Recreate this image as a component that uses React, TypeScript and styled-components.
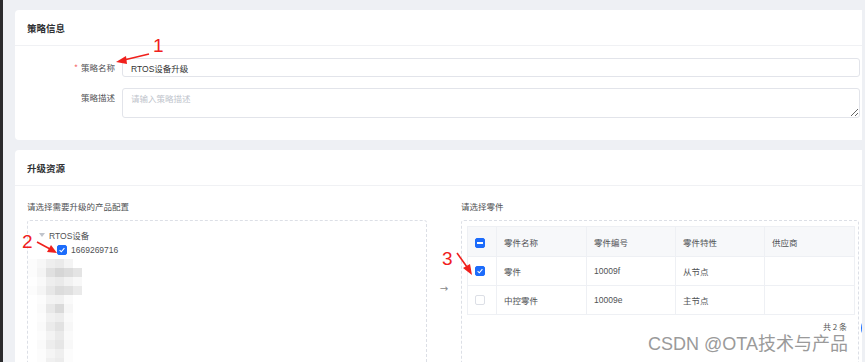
import styled, { createGlobalStyle } from "styled-components";

const GlobalStyle = createGlobalStyle`
  html, body {
    margin: 0;
    padding: 0;
    overflow: hidden;
    background: #eef0f4;
  }
  body {
    font-family: "Liberation Sans", "Noto Sans CJK SC", sans-serif;
    font-size: 8.5px;
    color: #505255;
  }
`;

type CheckState = "checked" | "indeterminate" | "none";

interface PartRow {
  name: string;
  code: string;
  role: string;
  supplier: string;
  checked: boolean;
}

const parts: PartRow[] = [
  { name: "零件", code: "10009f", role: "从节点", supplier: "", checked: true },
  { name: "中控零件", code: "10009e", role: "主节点", supplier: "", checked: false },
];

// 打码区域 (gray levels per 9px cell)
const mosaic: number[][] = [
  [252, 247, 238, 234, 244, 255],
  [252, 244, 224, 214, 220, 228],
  [254, 249, 238, 234, 242, 248],
  [252, 245, 231, 220, 224, 234],
  [255, 252, 243, 241, 250, 255],
  [255, 250, 232, 218, 246, 255],
  [255, 252, 241, 237, 250, 255],
  [255, 250, 235, 226, 247, 255],
  [255, 252, 243, 234, 250, 255],
  [255, 250, 237, 230, 248, 255],
  [255, 252, 245, 239, 252, 255],
  [255, 252, 240, 236, 252, 255],
];

export default function App() {
  return (
    <Frame>
      <GlobalStyle />
      <Card>
        <CardHeader>策略信息</CardHeader>
        <FormBody>
          <FormRow>
            <Label $required>策略名称</Label>
            <TextInput defaultValue="RTOS设备升级" />
          </FormRow>
          <FormRow>
            <Label>策略描述</Label>
            <TextArea placeholder="请输入策略描述" />
          </FormRow>
        </FormBody>
      </Card>

      <Card>
        <CardHeader>升级资源</CardHeader>
        <ResourceBody>
          <Column>
            <Caption>请选择需要升级的产品配置</Caption>
            <PickBox>
              <TreeRow>
                <Caret />
                <span>RTOS设备</span>
              </TreeRow>
              <TreeRow $indent={18}>
                <Check state="checked" />
                <span>1669269716</span>
              </TreeRow>
              <Mosaic width="54" height="108" viewBox="0 0 54 108">
                {mosaic.map((row, r) =>
                  row.map((g, c) => (
                    <rect
                      key={`${r}-${c}`}
                      x={c * 9}
                      y={r * 9}
                      width="9"
                      height="9"
                      fill={`rgb(${g},${g},${g})`}
                    />
                  ))
                )}
              </Mosaic>
            </PickBox>
          </Column>

          <ArrowCell>→</ArrowCell>

          <Column>
            <Caption>请选择零件</Caption>
            <PickBox $pad={5}>
              <Table>
                <colgroup>
                  <col style={{ width: 29 }} />
                  <col style={{ width: 90 }} />
                  <col style={{ width: 89 }} />
                  <col style={{ width: 89 }} />
                  <col />
                </colgroup>
                <thead>
                  <tr>
                    <HeadCell>
                      <Check state="indeterminate" />
                    </HeadCell>
                    <HeadCell>零件名称</HeadCell>
                    <HeadCell>零件编号</HeadCell>
                    <HeadCell>零件特性</HeadCell>
                    <HeadCell>供应商</HeadCell>
                  </tr>
                </thead>
                <tbody>
                  {parts.map(p => (
                    <tr key={p.code}>
                      <BodyCell>
                        <Check state={p.checked ? "checked" : "none"} />
                      </BodyCell>
                      <BodyCell>{p.name}</BodyCell>
                      <BodyCell>{p.code}</BodyCell>
                      <BodyCell>{p.role}</BodyCell>
                      <BodyCell>{p.supplier}</BodyCell>
                    </tr>
                  ))}
                </tbody>
              </Table>
              <Total>共 2 条</Total>
            </PickBox>
          </Column>
        </ResourceBody>
      </Card>

      <Watermark>CSDN @OTA技术与产品</Watermark>
      <FloatBtn />

      {/* 截图上的红色标注 */}
      <Marks width="865" height="362" viewBox="0 0 865 362">
        <g fill="#f0201c" stroke="#f0201c">
          <text x="153" y="52" fontSize="19" stroke="none" fontFamily="Liberation Sans, sans-serif">1</text>
          <line x1="149" y1="54" x2="124" y2="60" strokeWidth="1.6" />
          <polygon points="116,62 126,56 127,64" stroke="none" />

          <text x="22" y="248" fontSize="19" stroke="none" fontFamily="Liberation Sans, sans-serif">2</text>
          <line x1="37" y1="242" x2="50" y2="249" strokeWidth="1.6" />
          <polygon points="57,253 47,252 51,245" stroke="none" />

          <text x="442" y="265" fontSize="19" stroke="none" fontFamily="Liberation Sans, sans-serif">3</text>
          <line x1="457" y1="253" x2="467" y2="267" strokeWidth="1.6" />
          <polygon points="472,275 463,268 470,264" stroke="none" />
        </g>
      </Marks>
    </Frame>
  );
}

function Check({ state }: { state: CheckState }) {
  return (
    <CheckBox $state={state}>
      {state === "checked" && (
        <svg width="8" height="8" viewBox="0 0 8 8">
          <path d="M1.6 4.2 L3.3 5.8 L6.4 2.2" fill="none" stroke="#fff" strokeWidth="1.1" />
        </svg>
      )}
      {state === "indeterminate" && <Dash />}
    </CheckBox>
  );
}

// ---------- styled components ----------
const Frame = styled.div`
  position: relative;
  width: 862px;
  height: 362px;
  overflow: hidden;
  border-left: 3px solid #2b2b2d;
  padding: 10px 0 0 12px;
  box-sizing: border-box;
  display: flex;
  flex-direction: column;
  gap: 10px;
`;

const Card = styled.section`
  width: 860px;
  flex: 0 0 auto;
  background: #fff;
  border-radius: 4px;
`;

const CardHeader = styled.div`
  height: 36px;
  padding: 0 12px;
  display: flex;
  align-items: center;
  border-bottom: 1px solid #f0f1f4;
  box-sizing: border-box;
  color: #303133;
  font-family: "Noto Sans CJK SC", sans-serif;
  font-size: 9.5px;
  font-weight: 700;
`;

const FormBody = styled.div`
  display: flex;
  flex-direction: column;
  gap: 11px;
  padding: 12px 15px 22px 0;
`;

const FormRow = styled.div`
  display: flex;
  align-items: flex-start;
`;

const Label = styled.label<{ $required?: boolean }>`
  flex: 0 0 107px;
  padding-right: 7px;
  box-sizing: border-box;
  text-align: right;
  line-height: 19px;
  font-family: "Noto Sans CJK SC", sans-serif;
  font-size: 8.5px;
  color: #505255;
  &::before {
    content: ${({ $required }) => ($required ? '"*"' : "none")};
    color: #f56c6c;
    margin-right: 3px;
  }
`;

const TextInput = styled.input`
  flex: 1;
  height: 19px;
  padding: 0 8px;
  box-sizing: border-box;
  border: 1px solid #e2e4ea;
  border-radius: 3px;
  font-family: "Liberation Sans", "Noto Sans CJK SC", sans-serif;
  font-size: 8.5px;
  color: #333;
  outline: none;
`;

const TextArea = styled.textarea`
  flex: 1;
  height: 30px;
  padding: 3px 8px;
  box-sizing: border-box;
  border: 1px solid #e2e4ea;
  border-radius: 3px;
  font-family: "Noto Sans CJK SC", sans-serif;
  font-size: 8.5px;
  color: #333;
  outline: none;
  &::placeholder {
    color: #c0c4cc;
  }
`;

const ResourceBody = styled.div`
  display: grid;
  grid-template-columns: 400px 34px 398px;
  padding: 13px 16px 0 12px;
`;

const Column = styled.div`
  display: flex;
  flex-direction: column;
  gap: 7px;
`;

const Caption = styled.div`
  line-height: 14px;
  font-family: "Noto Sans CJK SC", sans-serif;
  font-size: 8.5px;
  color: #505255;
`;

const PickBox = styled.div<{ $pad?: number }>`
  height: 170px;
  padding: ${({ $pad }) => ($pad ?? 6)}px;
  box-sizing: border-box;
  border: 1px dashed #dcdfe6;
  border-radius: 3px;
  display: flex;
  flex-direction: column;
`;

const TreeRow = styled.div<{ $indent?: number }>`
  display: flex;
  align-items: center;
  gap: 4px;
  height: 15px;
  padding-left: ${({ $indent }) => 5 + ($indent ?? 0)}px;
  font-size: 8.5px;
  color: #505255;
`;

const Caret = styled.span`
  width: 0;
  height: 0;
  border-left: 3px solid transparent;
  border-right: 3px solid transparent;
  border-top: 4px solid #c0c4cc;
`;

const Mosaic = styled.svg`
  display: block;
  margin: 2px 0 0 -6px;
`;

const ArrowCell = styled.div`
  padding-top: 83px;
  text-align: center;
  color: #888;
  font-family: "DejaVu Sans", sans-serif;
  font-size: 10px;
  line-height: 14px;
`;

const Table = styled.table`
  width: 388px;
  border-collapse: collapse;
  table-layout: fixed;
  font-family: "Liberation Sans", "Noto Sans CJK SC", sans-serif;
  font-size: 8.5px;
  color: #505255;
`;

const HeadCell = styled.th`
  height: 29px;
  padding: 0 7px;
  text-align: left;
  font-weight: 400;
  background: #f7f8fa;
  border: 1px solid #eef0f4;
  font-family: "Noto Sans CJK SC", sans-serif;
`;

const BodyCell = styled.td`
  height: 29px;
  padding: 0 7px;
  border: 1px solid #eef0f4;
  box-sizing: border-box;
`;

const CheckBox = styled.span<{ $state: CheckState }>`
  display: inline-flex;
  vertical-align: middle;
  align-items: center;
  justify-content: center;
  width: 10px;
  height: 10px;
  box-sizing: border-box;
  border-radius: 2px;
  border: 1px solid ${({ $state }) => ($state === "none" ? "#dcdfe6" : "#1d6cfb")};
  background: ${({ $state }) => ($state === "none" ? "#fff" : "#1d6cfb")};
`;

const Dash = styled.span`
  width: 6px;
  height: 1.5px;
  background: #fff;
`;

const Total = styled.div`
  margin-top: 6px;
  padding-right: 6px;
  line-height: 12px;
  text-align: right;
  font-size: 8px;
  color: #555;
  font-family: "Noto Sans CJK SC", sans-serif;
`;

const Watermark = styled.div`
  position: absolute;
  left: 645px;
  top: 334px;
  font-family: "Liberation Sans", "Noto Sans CJK SC", sans-serif;
  font-size: 18px;
  line-height: 20px;
  color: #9a9a9a;
  text-shadow: 1px 1px 0 #fff, -1px -1px 0 #fff;
  white-space: nowrap;
`;

const FloatBtn = styled.div`
  position: absolute;
  left: 858px;
  top: 316px;
  width: 24px;
  height: 24px;
  border-radius: 50%;
  background: #1a6dff;
`;

const Marks = styled.svg`
  position: absolute;
  left: -3px;
  top: 0;
  pointer-events: none;
`;
